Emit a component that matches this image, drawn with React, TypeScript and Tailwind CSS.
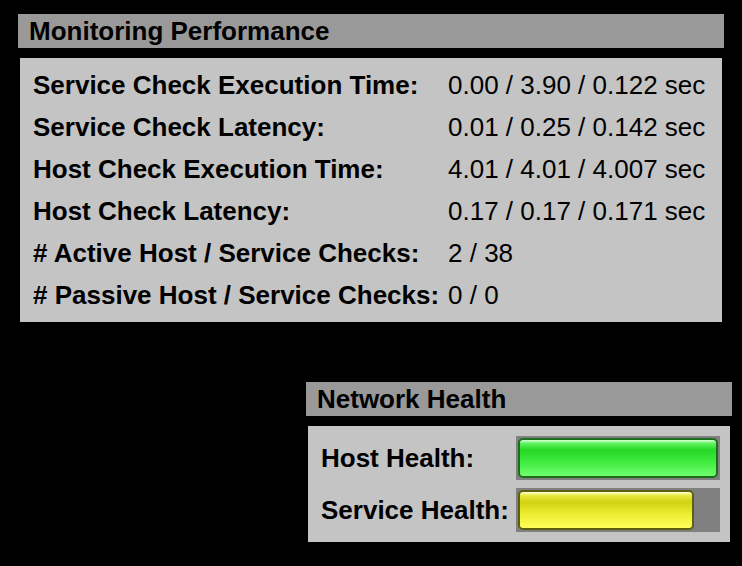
import React from "react";

const rows: [string, string][] = [
  ["Service Check Execution Time:", "0.00 / 3.90 / 0.122 sec"],
  ["Service Check Latency:", "0.01 / 0.25 / 0.142 sec"],
  ["Host Check Execution Time:", "4.01 / 4.01 / 4.007 sec"],
  ["Host Check Latency:", "0.17 / 0.17 / 0.171 sec"],
  ["# Active Host / Service Checks:", "2 / 38"],
  ["# Passive Host / Service Checks:", "0 / 0"],
];

function HealthBar({ pct, kind }: { pct: number; kind: "green" | "yellow" }) {
  const fill =
    kind === "green"
      ? "border-[#1c6e1c] bg-[linear-gradient(to_bottom,#d8ffd8_0%,#5ef25e_10%,#26d826_28%,#3eea3e_60%,#70ff70_100%)]"
      : "border-[#5e5e10] bg-[linear-gradient(to_bottom,#ffffd8_0%,#e8e840_10%,#d2d212_28%,#ecec30_60%,#ffff5c_100%)]";
  return (
    <div className="h-[44px] w-[204px] bg-[#808080] p-[2px]">
      <div
        className={`h-[40px] rounded-[5px] border-2 ${fill}`}
        style={{ width: `${pct}%` }}
      />
    </div>
  );
}

export default function App() {
  return (
    <div
      className="min-h-[566px] w-[742px] bg-black pt-[14px] text-black"
      style={{ fontFamily: '"Liberation Sans", Arial, sans-serif' }}
    >
      <div className="ml-[18px] w-[706px]">
        <div className="flex h-[34px] items-center bg-[#999999] pl-[11px] text-[26px] font-bold">
          Monitoring Performance
        </div>
        <div className="mx-[2px] mt-[10px] bg-[#c4c4c4] py-[6px] pl-[13px]">
          {rows.map(([label, value]) => (
            <div key={label} className="flex h-[42px] items-center text-[26px]">
              <div className="w-[415px] font-bold">{label}</div>
              <div>{value}</div>
            </div>
          ))}
        </div>
      </div>

      <div className="ml-[306px] mt-[60px] w-[426px]">
        <div className="flex h-[34px] items-center bg-[#999999] pl-[11px] text-[26px] font-bold">
          Network Health
        </div>
        <div className="mx-[2px] mt-[10px] flex flex-col gap-[8px] bg-[#c4c4c4] py-[10px] pl-[13px]">
          <div className="flex items-center">
            <div className="w-[195px] text-[26px] font-bold">Host Health:</div>
            <HealthBar pct={100} kind="green" />
          </div>
          <div className="flex items-center">
            <div className="w-[195px] text-[26px] font-bold">Service Health:</div>
            <HealthBar pct={88} kind="yellow" />
          </div>
        </div>
      </div>
    </div>
  );
}
